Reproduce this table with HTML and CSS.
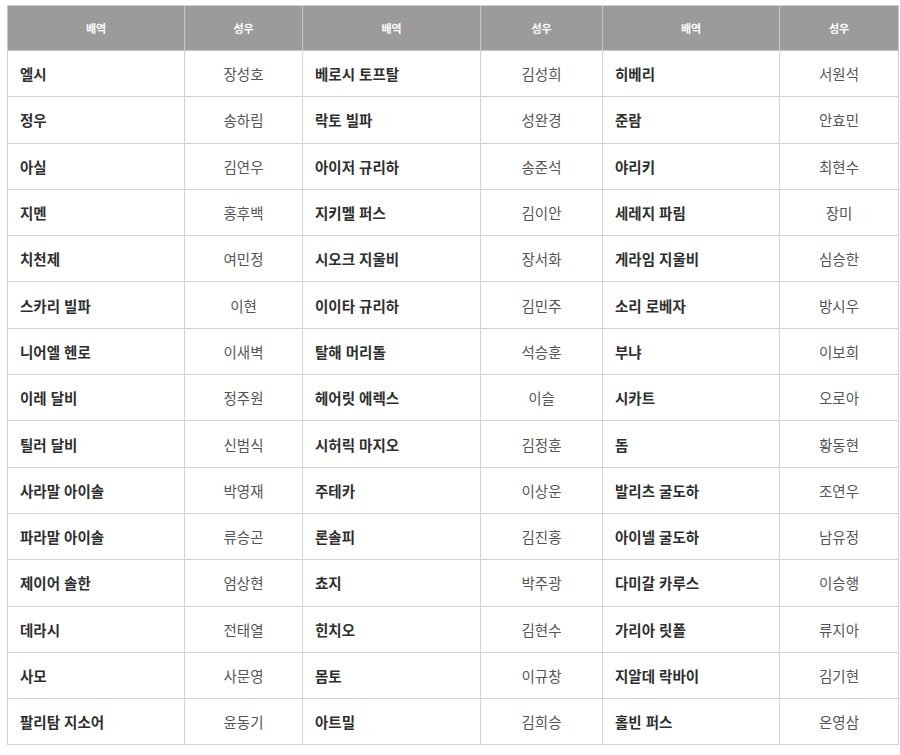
FILE: index.html
```html
<!DOCTYPE html>
<html lang="ko">
<head>
<meta charset="utf-8">
<link rel="stylesheet" href="styles.css">
</head>
<body>
<table class="cast">
<colgroup>
<col class="c-role1"><col class="c-va1"><col class="c-role2"><col class="c-va2"><col class="c-role3"><col class="c-va3">
</colgroup>
<thead>
<tr><th>배역</th><th>성우</th><th>배역</th><th>성우</th><th>배역</th><th>성우</th></tr>
</thead>
<tbody>
<tr><td class="role">엘시</td><td class="va">장성호</td><td class="role">베로시 토프탈</td><td class="va">김성희</td><td class="role">히베리</td><td class="va">서원석</td></tr>
<tr><td class="role">정우</td><td class="va">송하림</td><td class="role">락토 빌파</td><td class="va">성완경</td><td class="role">준람</td><td class="va">안효민</td></tr>
<tr><td class="role">아실</td><td class="va">김연우</td><td class="role">아이저 규리하</td><td class="va">송준석</td><td class="role">야리키</td><td class="va">최현수</td></tr>
<tr><td class="role">지멘</td><td class="va">홍후백</td><td class="role">지키멜 퍼스</td><td class="va">김이안</td><td class="role">세레지 파림</td><td class="va">장미</td></tr>
<tr><td class="role">치천제</td><td class="va">여민정</td><td class="role">시오크 지울비</td><td class="va">장서화</td><td class="role">게라임 지울비</td><td class="va">심승한</td></tr>
<tr><td class="role">스카리 빌파</td><td class="va">이현</td><td class="role">이이타 규리하</td><td class="va">김민주</td><td class="role">소리 로베자</td><td class="va">방시우</td></tr>
<tr><td class="role">니어엘 헨로</td><td class="va">이새벽</td><td class="role">탈해 머리돌</td><td class="va">석승훈</td><td class="role">부냐</td><td class="va">이보희</td></tr>
<tr><td class="role">이레 달비</td><td class="va">정주원</td><td class="role">헤어릿 에렉스</td><td class="va">이슬</td><td class="role">시카트</td><td class="va">오로아</td></tr>
<tr><td class="role">틸러 달비</td><td class="va">신범식</td><td class="role">시허릭 마지오</td><td class="va">김정훈</td><td class="role">돔</td><td class="va">황동현</td></tr>
<tr><td class="role">사라말 아이솔</td><td class="va">박영재</td><td class="role">주테카</td><td class="va">이상운</td><td class="role">발리츠 굴도하</td><td class="va">조연우</td></tr>
<tr><td class="role">파라말 아이솔</td><td class="va">류승곤</td><td class="role">론솔피</td><td class="va">김진홍</td><td class="role">아이넬 굴도하</td><td class="va">남유정</td></tr>
<tr><td class="role">제이어 솔한</td><td class="va">엄상현</td><td class="role">쵸지</td><td class="va">박주광</td><td class="role">다미갈 카루스</td><td class="va">이승행</td></tr>
<tr><td class="role">데라시</td><td class="va">전태열</td><td class="role">힌치오</td><td class="va">김현수</td><td class="role">가리아 릿폴</td><td class="va">류지아</td></tr>
<tr><td class="role">사모</td><td class="va">사문영</td><td class="role">몸토</td><td class="va">이규창</td><td class="role">지알데 락바이</td><td class="va">김기현</td></tr>
<tr><td class="role">팔리탐 지소어</td><td class="va">윤동기</td><td class="role">아트밀</td><td class="va">김희승</td><td class="role">홀빈 퍼스</td><td class="va">온영삼</td></tr>
</tbody>
</table>
</body>
</html>
```

FILE: styles.css
```css
html, body {
  margin: 0;
  padding: 0;
  background: #ffffff;
}
body {
  padding: 5px 0 0 7px;
  font-family: "Noto Sans CJK KR", "Noto Sans", sans-serif;
}
.cast {
  border-collapse: collapse;
  table-layout: fixed;
  width: 891px;
}
.c-role1 { width: 177px; }
.c-va1 { width: 118px; }
.c-role2 { width: 178px; }
.c-va2 { width: 122px; }
.c-role3 { width: 177px; }
.c-va3 { width: 119px; }
.cast th {
  background: #9b9b9b;
  color: #ffffff;
  font-size: 11px;
  font-weight: 700;
  height: 44px;
  padding: 0;
  border: 1px solid #c6c6c6;
  border-top-color: #d0d0d0;
  text-align: center;
  vertical-align: middle;
}
.cast td {
  border: 1px solid #d2d2d2;
  height: 45.3px;
  padding: 0;
  vertical-align: middle;
  font-size: 14.5px;
}
.cast td.role {
  padding-left: 12px;
  font-weight: 700;
  color: #2e2e2e;
}
.cast td.va {
  text-align: center;
  color: #555555;
}
```
